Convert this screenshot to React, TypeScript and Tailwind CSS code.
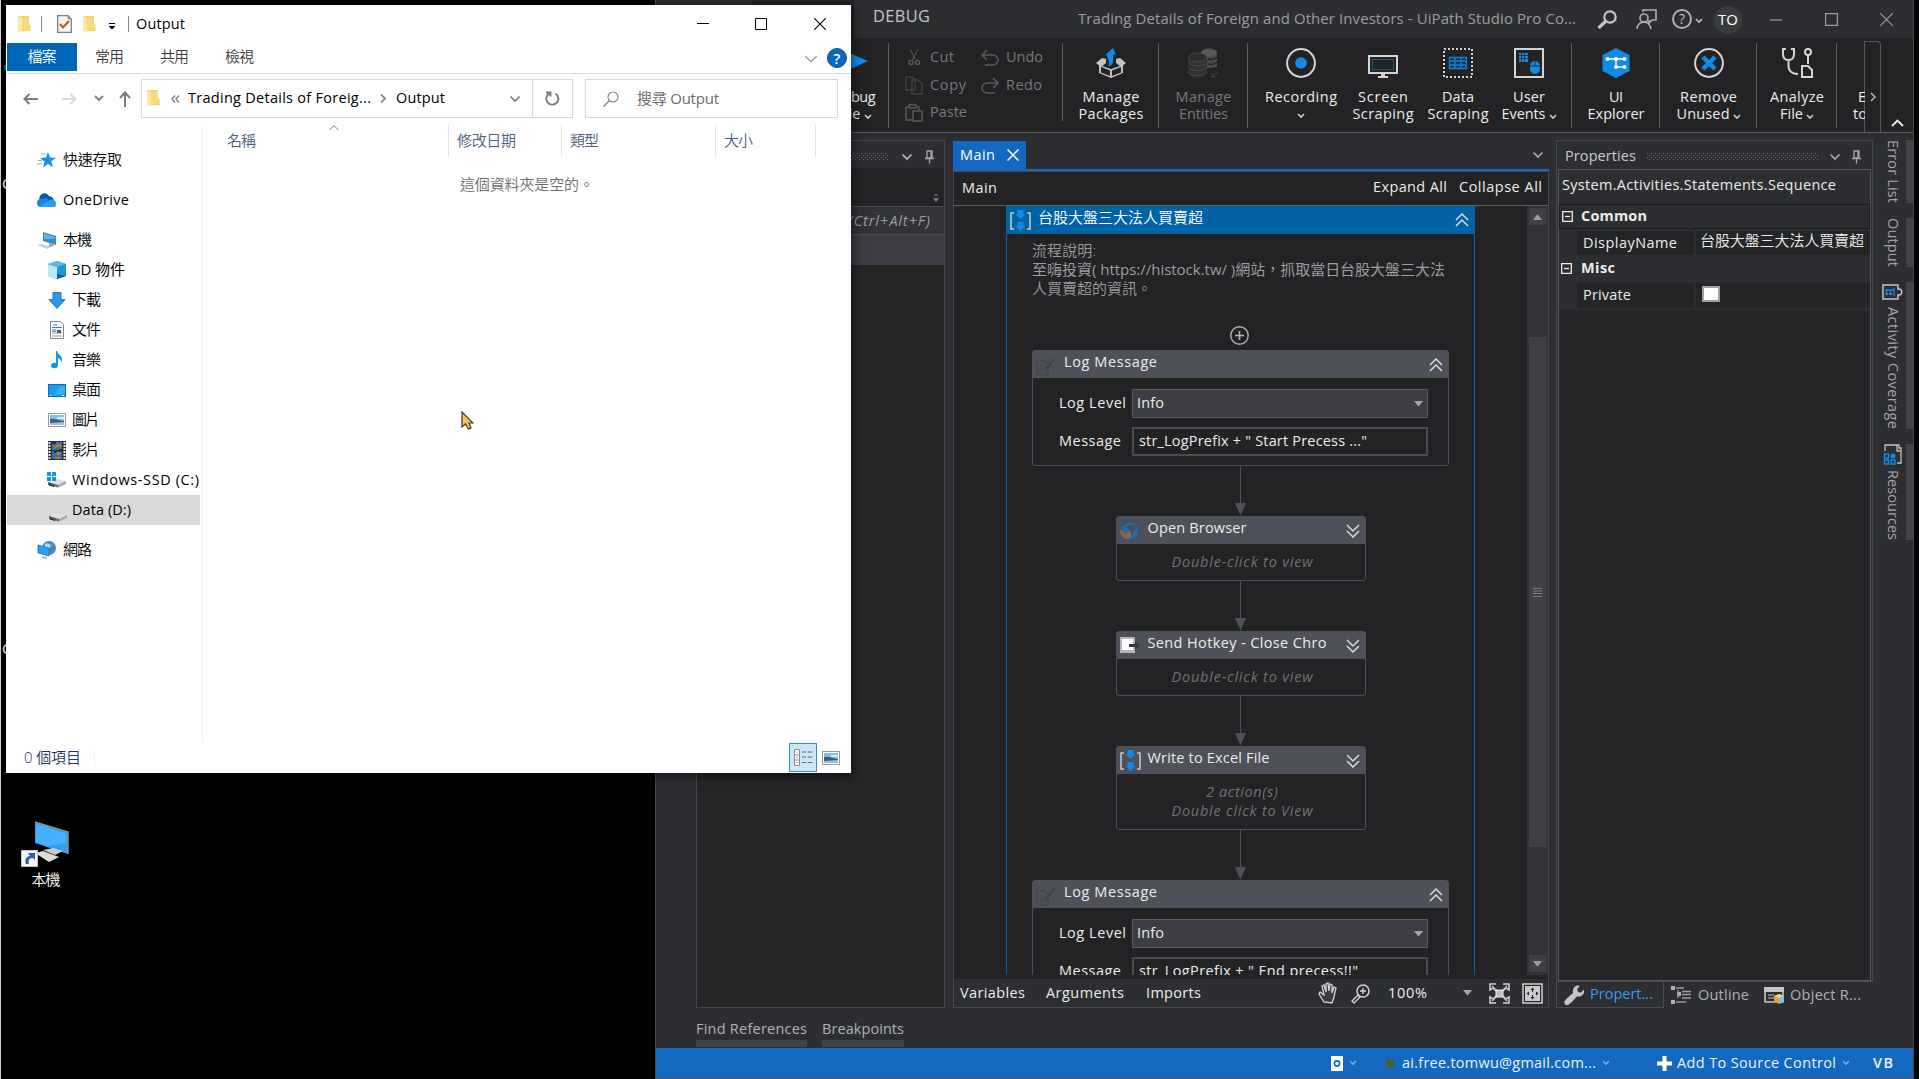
import { useLayoutEffect, useRef, useState } from "react";
import type { ReactNode } from "react";

/* Text that spreads its letters over the width (or height) set by its class. */
function T({ className = "", vertical = false, children }: { className?: string; vertical?: boolean; children: string }) {
  const outer = useRef<HTMLSpanElement>(null);
  const inner = useRef<HTMLSpanElement>(null);
  const [spacing, setSpacing] = useState(0);
  const latin = /^[\x20-\x7e]*$/.test(children);
  const mixed = /[A-Za-z]/.test(children);
  useLayoutEffect(() => {
    if (!outer.current || !inner.current) return;
    const box = inner.current.getBoundingClientRect();
    const room = vertical ? outer.current.clientHeight : outer.current.clientWidth;
    const natural = vertical ? box.height : box.width;
    setSpacing((room - natural) / Math.max(1, children.length - 1));
  }, [children, vertical]);
  return (
    <span ref={outer} className={`block shrink-0 whitespace-nowrap ${className}`}>
      <span
        ref={inner}
        className={`inline-block ${vertical ? "" : "-translate-y-px"} ${latin ? "text-[0.965em]" : ""} ${latin || mixed ? "" : "font-[350]"}`}
        style={{ letterSpacing: spacing }}
      >
        {children}
      </span>
    </span>
  );
}

function Svg({ w, h, className = "", children }: { w: number; h: number; className?: string; children: ReactNode }) {
  return (
    <svg width={w} height={h} viewBox={`0 0 ${w} ${h}`} fill="none" className={`shrink-0 ${className}`}>
      {children}
    </svg>
  );
}

function Chevron({ className = "", small = false }: { className?: string; small?: boolean }) {
  return small ? (
    <Svg w={8} h={6} className={className}>
      <path d="M1 1l3 3 3-3" stroke="currentColor" strokeWidth="1.6" />
    </Svg>
  ) : (
    <Svg w={12} h={8} className={className}>
      <path d="M1.5 1.5L6 6l4.500-4.500" stroke="currentColor" strokeWidth="1.7" />
    </Svg>
  );
}

function Folder({ className = "" }: { className?: string }) {
  return (
    <Svg w={13} h={17} className={className}>
      <path d="M0 0h11v8l1.500 1v6H3z" fill="#f5d06e" />
      <path d="M0 0l4 2v15l-4-2z" fill="#fbe7a8" />
      <path d="M4 2h7v12H4z" fill="#f8d97c" />
    </Svg>
  );
}

function Dots({ width }: { width: number }) {
  return (
    <Svg w={width} h={7}>
      <pattern id="grip-dots" width="4" height="4" patternUnits="userSpaceOnUse">
        <rect width="1" height="1" fill="#686a6e" />
        <rect x="2" y="2" width="1" height="1" fill="#686a6e" />
      </pattern>
      <rect width={width} height="7" fill="url(#grip-dots)" />
    </Svg>
  );
}

function Pin({ className = "" }: { className?: string }) {
  return (
    <Svg w={9} h={14} className={className}>
      <path d="M2 1h5v7H2zM0 8.500h9M4.500 9v4.500M6 1v7" stroke="#a5a6a8" strokeWidth="1.300" />
    </Svg>
  );
}

/* ---------- File Explorer ---------- */

function Picture() {
  return (
    <Svg w={18} h={14}>
      <rect x=".5" y=".5" width="17" height="13" fill="#fff" stroke="#9a9a9a" />
      <path d="M2 2h14v10H2z" fill="#7fc0ee" />
      <path d="M2 6c5-1 9 2 14 2v4H2z" fill="#38617d" />
      <path d="M2 10l14-1v3H2z" fill="#9cc0d8" />
      <path d="M9 4h7v2H9z" fill="#d6ecf9" />
    </Svg>
  );
}

function Drive({ windows = false }: { windows?: boolean }) {
  return (
    <Svg w={20} h={16} className={windows ? "-ml-px" : "mt-2"}>
      <path d="M1 10l9-3 9 2-8 4z" fill="#e0e0e0" />
      <path d="M1 10l10 3v2.500L1 13z" fill="#5a5a58" />
      <path d="M2 12l5 2v1l-5-1.500z" fill="#2b2b2b" />
      <path d="M11 13L19 9v3l-8 3.500z" fill="#a8a8a8" />
      <path d="M8 13.500h1.500v1H8z" fill="#7bd63c" />
      {windows && <path d="M0 0h4v4H0zM5 0h4v4H5zM0 5h4v4H0zM5 5h4v4H5z" fill="#1494ee" />}
    </Svg>
  );
}

function Computer() {
  return (
    <Svg w={20} h={17}>
      <path d="M6 0l13 4v9L6 9z" fill="#5f7f98" />
      <path d="M7 1.500l11 3.400v7L7 8z" fill="#1f93e8" />
      <path d="M7 1.500l11 3.400v2L7 7z" fill="#57b5f5" />
      <path d="M12 11l4 1 1 2-5 1z" fill="#9da3a8" />
      <path d="M0 13l5-1 9 3-4 2z" fill="#c9cccf" />
    </Svg>
  );
}

const sideItems: { label: string; width: string; level: 1 | 2; gap?: boolean; active?: boolean; icon: ReactNode }[] = [
  {
    label: "快速存取", width: "w-[59px]", level: 1,
    icon: (
      <Svg w={20} h={16}>
        <path d="M11 0l2 5.500 6 .2-4.700 3.500 1.700 6L11 12l-5 3.500 1.500-6L3 6l6-.4z" fill="#1f8fe0" />
        <path d="M4 2h5M1 8.500h4M0 12h5" stroke="#6cbcf2" strokeWidth="1.200" />
      </Svg>
    ),
  },
  {
    label: "OneDrive", width: "w-[66px]", level: 1, gap: true,
    icon: (
      <Svg w={20} h={14}>
        <path d="M3 8a5 5 0 0 1 9-5 6 6 0 0 1 5 4z" fill="#0a58a8" />
        <path d="M4 14a4 4 0 0 1 0-8l5-1 10 6a3 3 0 0 1-2 3z" fill="#1a83dc" />
        <path d="M3 13l10-6a4 4 0 0 1 4 7H4z" fill="#2ba2f0" />
      </Svg>
    ),
  },
  { label: "本機", width: "w-[29px]", level: 1, gap: true, icon: <Computer /> },
  {
    label: "3D 物件", width: "w-[53px]", level: 2,
    icon: (
      <Svg w={18} h={18}>
        <path d="M0 3l9-3 9 3v12l-9 3-9-3z" fill="#1b93dd" />
        <path d="M0 3l9 3v12l-9-3z" fill="#bfe8f8" />
        <path d="M0 3l9-3 9 3-9 3z" fill="#5bb9ea" />
        <path d="M9 13l9 2-9 3z" fill="#0a63a8" />
      </Svg>
    ),
  },
  { label: "下載", width: "w-[29px]", level: 2, icon: <Svg w={18} h={17}><path d="M5 .5h8v7h4L9 16.500 1 7.500h4z" fill="#2f96e0" stroke="#1d7cc4" /></Svg> },
  {
    label: "文件", width: "w-[29px]", level: 2,
    icon: (
      <Svg w={18} h={18}>
        <path d="M2.500.5h10l3 3v14h-13z" fill="#fff" stroke="#868686" />
        <path d="M5 4h4M4 6.500h10M4 9h4" stroke="#1787d6" />
        <path d="M4 12h10M4 15h10M4 10.500h4" stroke="#9a9a9a" />
        <path d="M9 9h4v3H9z" fill="#38617d" />
      </Svg>
    ),
  },
  { label: "音樂", width: "w-[29px]", level: 2, icon: <Svg w={18} h={18}><ellipse cx="6.500" cy="14.500" rx="3.500" ry="2.800" fill="#1593e8" /><path d="M9 0c1 4 5 4 5 8 0 2-1 3-1 4 0-3-1-4-3-5v8H8V0z" fill="#1593e8" /></Svg> },
  { label: "桌面", width: "w-[29px]", level: 2, icon: <Svg w={18} h={13}><rect x=".5" y=".5" width="17" height="12" fill="#1e9cf0" stroke="#0f6db4" /><path d="M6 11l7-9h4v8z" fill="#3babf4" /><path d="M2 11.500h1M14 11.500h2" stroke="#fff" /></Svg> },
  { label: "圖片", width: "w-[28px]", level: 2, icon: <Picture /> },
  {
    label: "影片", width: "w-[28px]", level: 2,
    icon: (
      <Svg w={18} h={19}>
        <path d="M0 0h18v19H0z" fill="#2e2e2e" />
        <path d="M1.500 1v17M16.500 1v17" stroke="#e8e8e8" strokeWidth="2" strokeDasharray="2 1" />
        <path d="M4 1h10v8H4zM4 10h10v8H4z" fill="#2f74b4" />
        <path d="M4 1h4v2H4zM11 8h3v3h-3zM6 9h4v3H6z" fill="#22303c" />
        <path d="M9 3h4v3h-3l-4 2V6zM8 11h4v3H9zM7 16h5v2H7z" fill="#c9731b" />
      </Svg>
    ),
  },
  { label: "Windows-SSD (C:)", width: "w-[127px]", level: 2, icon: <Drive windows /> },
  { label: "Data (D:)", width: "w-[59px]", level: 2, active: true, icon: <Drive /> },
  {
    label: "網路", width: "w-[29px]", level: 1, gap: true,
    icon: (
      <Svg w={20} h={18}>
        <circle cx="12" cy="7" r="7" fill="#4d86b8" />
        <path d="M8 3c3-2 4 0 6 1l-2 4-4-1z" fill="#b5d8ee" />
        <path d="M1 4l11 3v8L1 12z" fill="#2aa0ee" stroke="#1773b8" strokeWidth=".8" />
        <path d="M5 15l5 1v2l-5-1z" fill="#b4b8bb" />
      </Svg>
    ),
  },
];

function Explorer() {
  return (
    <div className="absolute left-[6px] top-[5px] flex h-[768px] w-[845px] flex-col bg-white text-[15px] leading-5 text-black shadow-[2px_3px_10px_rgba(0,0,0,0.55)]">
      <div className="flex h-[38px] items-center pl-3">
        <Folder />
        <i className="ml-[10px] h-4 w-px bg-[#8a8a8a]" />
        <Svg w={15} h={18} className="ml-[15px]">
          <path d="M.7.7H11l3.300 3.300v13.300H.7z" fill="#f8f8f8" stroke="#7e7e7e" strokeWidth="1.300" />
          <path d="M11 .7V4h3.300" stroke="#7e7e7e" />
          <path d="M3 9l3 3.500L12 6" stroke="#c8540c" strokeWidth="2" />
        </Svg>
        <Folder className="ml-[11px]" />
        <Svg w={8} h={8} className="ml-3 mt-1"><path d="M1 1.500h6" stroke="#000" strokeWidth="1" /><path d="M.5 4h7L4 7.500z" fill="#000" /></Svg>
        <i className="ml-[12px] h-4 w-px bg-[#8a8a8a]" />
        <T className="ml-[7px] w-[49px]">Output</T>
        <div className="ml-auto flex items-center pr-[25px]">
          <Svg w={12} h={12}><path d="M0 5.500h12" stroke="#000" /></Svg>
          <Svg w={12} h={12} className="ml-[46px] mr-[47px]"><path d="M.5.5h11v11H.5z" stroke="#000" /></Svg>
          <Svg w={12} h={12}><path d="M0 0l12 12M12 0L0 12" stroke="#000" strokeWidth="1.100" /></Svg>
        </div>
      </div>
      <div className="flex h-[31px] items-start border-b border-[#dadada] text-[#3c3c3c]">
        <div className="ml-px flex h-7 w-[70px] items-center justify-center bg-[#0067b8] text-white"><T className="w-[29px]">檔案</T></div>
        <T className="ml-[18px] mt-1 w-[29px]">常用</T>
        <T className="ml-[36px] mt-1 w-[29px]">共用</T>
        <T className="ml-[36px] mt-1 w-[29px]">檢視</T>
        <Svg w={12} h={8} className="ml-auto mr-[10px] mt-3"><path d="M0 1l6 5.500L12 1" stroke="#9a9a9a" strokeWidth="1.300" /></Svg>
        <div className="mr-1 mt-[5px] flex size-5 items-center justify-center rounded-full border border-[#1c4f80] bg-[#0a67c0] text-[15px] font-semibold text-white">?</div>
      </div>
      <div className="mt-[5px] flex h-[39px] items-center text-[#7c7c7c]">
        <Svg w={15} h={12} className="ml-[17px]"><path d="M15 6H1M6.500 1l-5 5 5 5" stroke="currentColor" strokeWidth="2" /></Svg>
        <Svg w={15} h={12} className="ml-6"><path d="M0 6h14M8.500 1l5 5-5 5" stroke="#dadada" strokeWidth="2" /></Svg>
        <Svg w={10} h={7} className="ml-[17px]"><path d="M1 1l4 4 4-4" stroke="currentColor" strokeWidth="1.800" /></Svg>
        <Svg w={12} h={16} className="ml-[15px]"><path d="M6 16V1.500M1 7l5-5.500L11 7" stroke="currentColor" strokeWidth="2" /></Svg>
        <div className="ml-[10px] flex h-[39px] w-[432px] items-center border border-[#d9d9d9]">
          <Folder className="ml-[5px]" />
          <Svg w={9} h={8} className="ml-[11px]"><path d="M4 .5L1 4l3 3.500M8 .5L5 4l3 3.500" stroke="currentColor" strokeWidth="1.300" /></Svg>
          <T className="ml-[8px] w-[183px] text-black">Trading Details of Foreig...</T>
          <Svg w={6} h={9} className="ml-[9px]"><path d="M1 .5l4 4-4 4" stroke="currentColor" strokeWidth="1.700" /></Svg>
          <T className="ml-[10px] w-[49px] text-black">Output</T>
          <Chevron className="ml-auto mr-[11px]" />
          <div className="flex h-full w-[40px] items-center justify-center border-l border-[#d9d9d9]">
            <Svg w={15} h={15}><path d="M10.500 2.500a6 6 0 1 1-6-.2M1 1.500h4.500v4" stroke="currentColor" strokeWidth="1.900" /></Svg>
          </div>
        </div>
        <div className="ml-3 flex h-[39px] w-[253px] items-center border border-[#d9d9d9] text-[#6b6b6b]">
          <Svg w={16} h={16} className="ml-[17px]"><circle cx="10" cy="6" r="5" stroke="#8a8a8a" strokeWidth="1.200" /><path d="M6.500 9.500L.5 15.500" stroke="#8a8a8a" strokeWidth="1.400" /></Svg>
          <T className="ml-[18px] w-[82px]">搜尋 Output</T>
        </div>
      </div>
      <div className="flex min-h-0 flex-1 pt-[7px]">
        <div className="flex w-[196px] flex-col pt-5">
          {sideItems.map((s) => (
            <div
              key={s.label}
              className={`ml-px flex h-[30px] w-[193px] shrink-0 items-center ${s.gap ? "mt-[10px]" : ""} ${s.active ? "bg-[#d9d9d9]" : ""} ${s.level === 1 ? "pl-[30px]" : "pl-[41px]"}`}
            >
              <span className={`flex shrink-0 justify-start ${s.level === 1 ? "w-[26px]" : "w-[24px]"}`}>{s.icon}</span>
              <T className={s.width}>{s.label}</T>
            </div>
          ))}
        </div>
        <div className="flex-1 border-l border-[#f0f0f0]">
          <div className="relative flex h-[31px] items-center text-[#4c607a]">
            <Svg w={10} h={6} className="absolute left-[126px] top-0"><path d="M.5 5L5 .8 9.500 5" stroke="#7a7a7a" /></Svg>
            <div className="flex h-full w-[246px] items-center border-r border-[#e3e3e3] pl-6"><T className="w-[29px]">名稱</T></div>
            <div className="flex h-full w-[113px] items-center border-r border-[#e3e3e3] pl-[8px]"><T className="w-[59px]">修改日期</T></div>
            <div className="flex h-full w-[154px] items-center border-r border-[#e3e3e3] pl-[8px]"><T className="w-[29px]">類型</T></div>
            <div className="flex h-full w-[100px] items-center border-r border-[#e3e3e3] pl-[8px]"><T className="w-[29px]">大小</T></div>
          </div>
          <T className="ml-[257px] mt-[19px] w-[134px] text-[#6d6d6d]">這個資料夾是空的。</T>
        </div>
      </div>
      <div className="flex h-[31px] items-center pl-[18px] text-[#1e395b]">
        <T className="w-[57px]">0 個項目</T>
        <i className="ml-[13px] h-4 w-px bg-[#f0f0f0]" />
        <div className="ml-auto flex h-[29px] w-[28px] items-center justify-center border border-[#3c8fc4] bg-[#cbe8f6]">
          <Svg w={19} h={17}>
            <path d="M.5.5h5v16h-5zM.5 6h5M.5 11h5" fill="#fff" stroke="#8a8a8a" />
            <path d="M8 3h4M13.500 3h5M8 8h4M13.500 8h5M8 13.500h4M13.500 13.500h5" stroke="#666" />
            <path d="M2.500 3h1" stroke="#1787d6" /><path d="M2.500 8.500h1" stroke="#39832a" /><path d="M2.500 13.500h1" stroke="#c03020" />
          </Svg>
        </div>
        <span className="ml-[5px] mr-[11px]"><Picture /></span>
      </div>
    </div>
  );
}

/* ---------- Studio: ribbon ---------- */

function Tool({ icon, lines, cell, dim = false }: { icon: ReactNode; lines: ReactNode; cell: string; dim?: boolean }) {
  return (
    <div className={`flex shrink-0 flex-col items-center pt-[10px] leading-4 ${dim ? "text-[#77787b]" : "text-[#ececec]"} ${cell}`}>
      <div className="mb-[11px] flex h-[30px] items-end">{icon}</div>
      {lines}
    </div>
  );
}

function WithChevron({ children }: { children: ReactNode }) {
  return (
    <span className="flex items-center gap-[3px]">
      {children}
      <Chevron small className="mt-1 text-[#cfcfcf]" />
    </span>
  );
}

function Divider({ className = "h-[85px]" }: { className?: string }) {
  return <i className={`-ml-px mt-[5px] w-px shrink-0 bg-[#5a5c62] ${className}`} />;
}

function Ribbon() {
  return (
    <div className="flex h-[95px] shrink-0 border-b border-[#5a5c62] bg-[#232325] pl-[164px] text-[15px]">
      <Tool cell="w-[69px]" icon={<Svg w={26} h={24} className="mb-1"><path d="M0 0l26 11L0 23z" fill="#0f8ce9" /></Svg>}
        lines={<><T className="w-[42px]">Debug</T><WithChevron><T className="w-[23px]">File</T></WithChevron></>} />
      <Divider />
      <div className="flex w-[174px] shrink-0 text-[#77787b]">
        <div className="ml-4 mt-[9px] flex w-[75px] flex-col leading-5">
          <div className="flex h-5 items-center">
            <Svg w={18} h={18}><path d="M5 1l5.500 11M13 1L7.500 12" stroke="#5b5c5f" /><circle cx="6" cy="14.500" r="2" stroke="#5b5c5f" strokeWidth="1.400" /><circle cx="12.500" cy="14.500" r="2" stroke="#5b5c5f" strokeWidth="1.400" /></Svg>
            <T className="ml-[7px] w-[24px]">Cut</T>
          </div>
          <div className="mt-2 flex h-5 items-center">
            <Svg w={18} h={19}><path d="M1 1h6l3 3v10H1zM7 4h6l4 4v10H7z" stroke="#414245" strokeWidth="1.400" fill="#232325" /></Svg>
            <T className="ml-[7px] w-[36px]">Copy</T>
          </div>
          <div className="mt-[7px] flex h-5 items-center">
            <Svg w={18} h={19}><path d="M7 17H1V4h3V2h2l1-1 1 1h3v2h3v3M4 5h7M8 8h9v10H8z" stroke="#5b5c5f" strokeWidth="1.400" /></Svg>
            <T className="ml-[7px] w-[37px]">Paste</T>
          </div>
        </div>
        <div className="mt-[9px] flex flex-col leading-5">
          <div className="flex h-5 items-center">
            <Svg w={20} h={17}><path d="M7 1L2 6l5 5M2 6h11a5 5 0 0 1 0 10H5" stroke="#5b5c5f" strokeWidth="1.500" /></Svg>
            <T className="ml-[6px] w-[37px]">Undo</T>
          </div>
          <div className="mt-2 flex h-5 items-center">
            <Svg w={20} h={17}><path d="M13 1l5 5-5 5M18 6H7a5 5 0 0 0 0 10h8" stroke="#5b5c5f" strokeWidth="1.500" /></Svg>
            <T className="ml-[6px] w-[36px]">Redo</T>
          </div>
        </div>
      </div>
      <Divider className="h-[78px]" />
      <Tool cell="w-[96px]" lines={<><T className="w-[57px]">Manage</T><T className="w-[65px]">Packages</T></>}
        icon={<Svg w={30} h={30}><path d="M3 17l12 4 12-4v8l-12 5L3 25z" fill="#bfc0c2" /><path d="M5 19l9 3.500V28l-9-3.500zM25 19l-9 3.500V28l9-3.500z" fill="#232325" /><path d="M0 15l6-5 4 1v4l-5 4zM30 15l-6-5-4 1v4l5 4z" fill="#c4c5c7" /><path d="M12 18c3-4-1-7-1-11l-2 .5L17 0l3 7-3-.5c0 5 2 8-3 11.500z" fill="#0f8ce9" /></Svg>} />
      <Divider />
      <Tool dim cell="w-[89px]" lines={<><T className="w-[56px]">Manage</T><T className="w-[49px]">Entities</T></>}
        icon={<Svg w={31} h={30}>
          <path d="M13 4v17l16-2V4z" fill="#4a4b4d" /><path d="M20 11c4 1 8 0 9-2M20 16c4 1 8 0 9-2M20 21c4 1 8 0 9-2" stroke="#232325" strokeWidth="1.500" />
          <ellipse cx="21" cy="4.500" rx="8" ry="4" fill="#58595b" />
          <path d="M0 10v15c3 6 16 6 19 0V10z" fill="#303133" /><ellipse cx="9.500" cy="9.500" rx="9" ry="4.500" fill="#2b2c2e" stroke="#48494c" />
          <path d="M.5 14c3 5 15 5 18 0M.5 19c3 5 15 5 18 0M.5 24c3 5 15 5 18 0" stroke="#48494c" /><path d="M29 24l-5 5M24 25v4h4" stroke="#48494c" />
        </Svg>} />
      <Divider />
      <Tool cell="ml-[11px] w-[84px]" lines={<><T className="w-[72px]">Recording</T><Chevron small className="mt-[7px] text-[#cfcfcf]" /></>}
        icon={<Svg w={30} h={30}><circle cx="15" cy="15" r="13.900" stroke="#d4d4d4" strokeWidth="2" /><circle cx="15" cy="15" r="5.800" fill="#0f8ce9" /></Svg>} />
      <Tool cell="ml-[3px] w-[74px]" lines={<><T className="w-[50px]">Screen</T><T className="w-[61px]">Scraping</T></>}
        icon={<Svg w={30} h={23}><path d="M1 1h28v17H1z" stroke="#d4d4d4" strokeWidth="2" /><path d="M13 19h4v2h3v2H10v-2h3z" fill="#d4d4d4" /><path d="M4.500 4.500h21v10h-21z" stroke="#0f8ce9" strokeDasharray="1 1" /></Svg>} />
      <Tool cell="w-[76px]" lines={<><T className="w-[32px]">Data</T><T className="w-[61px]">Scraping</T></>}
        icon={<Svg w={30} h={30}><path d="M1 1h28v28H1z" stroke="#d4d4d4" strokeWidth="2" strokeDasharray="2 2" /><path d="M6.500 9.500h17v11h-17zM6.500 13h17M6.500 17h17M12 9.500v11M18 9.500v11" stroke="#1581d2" strokeWidth="1.300" fill="#123652" /></Svg>} />
      <Tool cell="w-[66px]" lines={<><T className="w-[32px]">User</T><WithChevron><T className="w-[44px]">Events</T></WithChevron></>}
        icon={<Svg w={30} h={30}><path d="M1 1h28v28H1z" stroke="#d4d4d4" strokeWidth="2" /><path d="M5 5h9v9H5z" fill="#0f8ce9" /><path d="M7.500 5v9M10.500 5v9M5 7.500h9M5 10.500h9" stroke="#232325" strokeWidth=".8" /><rect x="16" y="13" width="10" height="13" rx="5" fill="#0f8ce9" /><path d="M16 18h10M21 13v5" stroke="#232325" /></Svg>} />
      <Divider className="ml-[9px] h-[85px]" />
      <Tool cell="w-[88px]" lines={<><T className="w-[14px]">UI</T><T className="w-[57px]">Explorer</T></>}
        icon={<Svg w={28} h={30}><path d="M14 0l13.500 7v16L14 30 .5 23V7z" fill="#0f8ce9" /><path d="M5 11h18M14 11v8h8" stroke="#fff" strokeWidth="1.400" /><g fill="#fff"><circle cx="5.500" cy="11" r="2" /><circle cx="14" cy="11" r="2" /><circle cx="22.500" cy="11" r="2" /><circle cx="14" cy="19" r="2" /><circle cx="22.500" cy="19" r="2" /></g></Svg>} />
      <Divider />
      <Tool cell="w-[97px]" lines={<><T className="w-[57px]">Remove</T><WithChevron><T className="w-[53px]">Unused</T></WithChevron></>}
        icon={<Svg w={30} h={30}><circle cx="15" cy="15" r="13.900" stroke="#d4d4d4" strokeWidth="2" /><path d="M9 9l12 12M21 9L9 21" stroke="#0f8ce9" strokeWidth="4.500" /></Svg>} />
      <Divider />
      <Tool cell="w-[80px]" lines={<><T className="w-[54px]">Analyze</T><WithChevron><T className="w-[23px]">File</T></WithChevron></>}
        icon={<Svg w={31} h={30}><path d="M4 1H1v5c0 4 2 6 5.500 6S12 10 12 6V1H9M6.500 12v6c0 5 4 8 9.500 8" stroke="#d4d4d4" strokeWidth="2" /><circle cx="26" cy="4" r="3" stroke="#d4d4d4" strokeWidth="2" /><path d="M26 7v9M20 18h6l4 4v7H20z" stroke="#d4d4d4" strokeWidth="2" /></Svg>} />
      <Divider />
      <div className="w-[28px] shrink-0 overflow-hidden pl-[16px] pt-[51px] leading-4 text-[#ececec]">
        <T className="ml-[5px] w-[8px]">E</T>
        <T className="w-[14px]">to</T>
      </div>
      <div className="-ml-px mt-[3px] flex w-[17px] shrink-0 items-center justify-center rounded-tr border border-b-0 border-[#55575c] pt-5">
        <Svg w={6} h={10}><path d="M1 1l4 4-4 4" stroke="#b5b5b5" strokeWidth="1.500" /></Svg>
      </div>
      <Svg w={13} h={8} className="ml-[10px] mt-[81px]"><path d="M1 7l5.500-5.500L12 7" stroke="#e8e8e8" strokeWidth="1.900" /></Svg>
    </div>
  );
}

function TitleBar() {
  return (
    <div className="flex h-[38px] shrink-0 items-center bg-[#2d2e31] text-[#9c9d9f]">
      <i className="ml-[96px] h-full w-[102px] bg-[#232325]" />
      <T className="-mt-1 ml-[19px] w-[57px] text-[17px] text-[#c4c5c6]">DEBUG</T>
      <T className="ml-[148px] w-[498px] text-[15.500px]">Trading Details of Foreign and Other Investors - UiPath Studio Pro Co...</T>
      <Svg w={20} h={19} className="ml-[21px]"><circle cx="13" cy="7" r="5.700" stroke="#c4c5c6" strokeWidth="2.200" /><path d="M9 11l-7.500 7" stroke="#c4c5c6" strokeWidth="3.200" /></Svg>
      <Svg w={21} h={21} className="ml-[19px] mt-0"><circle cx="8" cy="9" r="4" stroke="#b0b1b3" strokeWidth="1.600" /><path d="M1 20c0-4 3-7 7-7s6 3 7 7M7 3V1h13v10h-4l-3 3v-3" stroke="#b0b1b3" strokeWidth="1.600" /></Svg>
      <div className="ml-[15px] flex size-5 items-center justify-center rounded-full border-2 border-[#b0b1b3] text-[14px] text-[#c4c5c6]">?</div>
      <Chevron small className="ml-[3px] mt-1 text-[#c4c5c6]" />
      <div className="ml-[11px] mt-[1px] flex size-7 items-center justify-center rounded-full bg-[#3a3b3f] text-[15.500px] text-white"><T className="w-[20px]">TO</T></div>
      <Svg w={13} h={13} className="ml-[28px]"><path d="M0 7h12" stroke="currentColor" strokeWidth="1.200" /></Svg>
      <Svg w={13} h={13} className="ml-[42px]"><path d="M.6.6h11.800v11.800H.6z" stroke="currentColor" strokeWidth="1.200" /></Svg>
      <Svg w={13} h={13} className="ml-[42px]"><path d="M0 0l13 13M13 0L0 13" stroke="currentColor" strokeWidth="1.200" /></Svg>
    </div>
  );
}

/* ---------- Studio: panels ---------- */

function ActivitiesPanel() {
  return (
    <div className="ml-[40px] mt-[7px] flex h-[868px] w-[249px] shrink-0 flex-col border border-[#46484d] bg-[#252628]">
      <div className="flex h-[27px] shrink-0 items-center justify-end bg-[#2d2e32] pt-1">
        <Dots width={180} />
        <Chevron className="ml-3 text-[#b5b6b8]" />
        <Pin className="ml-[12px] mr-[10px]" />
      </div>
      <div className="flex h-[38px] shrink-0 items-end justify-end bg-[#242527] pb-1 pr-[5px]">
        <Svg w={6} h={8}><path d="M1 1h4" stroke="#7d7e80" /><path d="M0 4h6L3 8z" fill="#7d7e80" /></Svg>
      </div>
      <div className="flex h-[29px] shrink-0 items-center justify-end border-y border-[#4a4c51] bg-[#323337] pr-[14px] text-[15.500px] italic text-[#9a9b9d]">
        <T className="w-[205px]">Search activities (Ctrl+Alt+F)</T>
      </div>
      <div className="h-[30px] shrink-0 bg-[#3d3d45]" />
    </div>
  );
}

function DoubleChevron({ down = false }: { down?: boolean }) {
  return (
    <Svg w={14} h={14} className={down ? "rotate-180" : ""}>
      <path d="M1 7l6-6 6 6M1 13l6-6 6 6" stroke="#d8d9da" strokeWidth="1.500" />
    </Svg>
  );
}

function SequenceIcon() {
  return (
    <Svg w={21} h={21}>
      <path d="M4 3H1v16h3M17 3h3v16h-3" stroke="#c9cacc" strokeWidth="1.500" />
      <path d="M7.500 0h6v4h2l-5 5-5-5h2zM7.500 12h6v4h2l-5 5-5-5h2z" fill="#0f8ce9" />
    </Svg>
  );
}

function GlobeIcon() {
  return (
    <Svg w={20} h={20}>
      <circle cx="10" cy="10" r="9" fill="#2b6aa0" stroke="#1f5c91" />
      <path d="M9 4c4-2 8 2 7 5l-3 2v5l-3-4V9l-4-2z" fill="#464f5d" />
      <path d="M0 8l6 6V11h5v4c-1 3-5 4-7 2C1 15 0 12 0 8z" fill="#8a6a40" />
    </Svg>
  );
}

function HotkeyIcon() {
  return (
    <Svg w={20} h={17}>
      <path d="M0 0h15v16H0z" fill="#b4b6b8" /><path d="M2 2h11v11H2z" fill="#fff" />
      <path d="M9 7h6V4l5 4.500-5 4.500v-3H9z" fill="#37383c" />
    </Svg>
  );
}

function LogIcon() {
  return (
    <Svg w={19} h={19} className="-ml-px">
      <path d="M1 4h8l3 3v11H1zM3 9h5M3 12h5M3 15h4" stroke="#42444a" strokeWidth="1.200" />
      <path d="M18 1L9 11l-1 3 3-1 8-11z" fill="#42444a" />
    </Svg>
  );
}

function Connector() {
  return (
    <Svg w={11} h={50}>
      <path d="M5.500 0v40" stroke="#50525a" strokeWidth="1" /><path d="M0 37h11L5.500 49.500z" fill="#50525a" />
    </Svg>
  );
}

function LogCard({ text, width }: { text: string; width: string }) {
  return (
    <div className="h-[116px] w-[417px] shrink-0 rounded-[3px] border border-[#4e5159]">
      <div className="flex h-[27px] items-center bg-[#4e5159] pl-1 pr-[5px]">
        <span className="mt-1"><LogIcon /></span>
        <T className="-mt-[5px] ml-[9px] w-[93px] text-[#ececec]">Log Message</T>
        <span className="ml-auto"><DoubleChevron /></span>
      </div>
      <div className="flex items-center pl-[26px] pt-[11px]">
        <T className="w-[67px] text-[#ececec]">Log Level</T>
        <div className="ml-[6px] flex h-[29px] w-[296px] items-center border border-[#5b5d62] bg-[#3d3d45] pl-1 pr-[4px] text-[#ececec]">
          <T className="w-[27px]">Info</T>
          <Svg w={9} h={6} className="ml-auto"><path d="M0 0h9L4.500 5.500z" fill="#a5a6a8" /></Svg>
        </div>
      </div>
      <div className="flex items-center pl-[26px] pt-[9px]">
        <T className="w-[62px] text-[#ececec]">Message</T>
        <div className="ml-[11px] flex h-[29px] w-[296px] items-center border-2 border-[#4a4c53] pl-[5px] text-[#ececec]">
          <T className={width}>{text}</T>
        </div>
      </div>
    </div>
  );
}

function ActivityCard({ icon, title, width, lines }: { icon: ReactNode; title: string; width: string; lines: string[] }) {
  return (
    <div className="w-[250px] shrink-0 rounded-[3px] border border-[#4e5159]">
      <div className="flex h-[27px] items-center bg-[#4e5159] pl-[3px] pr-[5px]">
        <span className="flex w-[28px]">{icon}</span>
        <T className={`-mt-[5px] text-[#ececec] ${width}`}>{title}</T>
        <span className="ml-auto"><DoubleChevron down /></span>
      </div>
      <div className="flex flex-col items-center pb-2 pl-[3px] pt-[9px] leading-[19px] italic text-[#717274]">
        {lines.map((l) => (
          <T key={l} className={l.startsWith("2") ? "w-[72px]" : "w-[141px]"}>{l}</T>
        ))}
      </div>
    </div>
  );
}

function Designer() {
  return (
    <div className="ml-[8px] mt-[8px] flex w-[596px] shrink-0 flex-col text-[15px] leading-5">
      <div className="flex h-[30px] shrink-0 items-start border-b-2 border-[#1568bf]">
        <div className="flex h-[29px] w-[73px] items-center bg-[#1568bf] pb-px pl-[7px] text-white">
          <T className="w-[35px]">Main</T>
          <Svg w={12} h={12} className="ml-3"><path d="M.5.5l11 11M11.500.5l-11 11" stroke="#fff" strokeWidth="1.500" /></Svg>
        </div>
        <Chevron className="ml-auto mr-[5px] mt-[10px] text-[#a5a6a8]" />
      </div>
      <div className="flex h-[837px] flex-col border border-[#46484d] bg-[#232325]">
        <div className="flex h-[34px] shrink-0 items-center border-b border-[#5a5c62] pl-2 pr-[6px] text-[#ececec]">
          <T className="w-[35px]">Main</T>
          <T className="-mt-[3px] ml-auto w-[74px]">Expand All</T>
          <T className="-mt-[3px] ml-3 w-[83px]">Collapse All</T>
        </div>
        <div className="flex h-[769px] shrink-0 overflow-hidden">
          <div className="ml-[52px] flex h-[1000px] w-[469px] shrink-0 flex-col items-center border-x border-[#0067b0]">
            <div className="flex h-7 w-[469px] shrink-0 items-center bg-[#0063a6] pl-1 pr-[6px] text-white">
              <SequenceIcon />
              <T className="-mt-1 ml-[7px] w-[165px]">台股大盤三大法人買賣超</T>
              <span className="ml-auto"><DoubleChevron /></span>
            </div>
            <div className="mt-[8px] w-[417px] shrink-0 leading-[19px] text-[#9c9d9f]">
              <T className="w-[64px]">流程說明:</T>
              <T className="w-[413px]">至嗨投資( https://histock.tw/ )網站，抓取當日台股大盤三大法</T>
              <T className="w-[120px]">人買賣超的資訊。</T>
            </div>
            <Svg w={19} h={19} className="mr-[3px] mt-[27px]"><circle cx="9.500" cy="9.500" r="8.700" stroke="#b0b1b3" strokeWidth="1.400" /><path d="M5 9.500h9M9.500 5v9" stroke="#b0b1b3" strokeWidth="1.600" /></Svg>
            <div className="h-[5px] shrink-0" />
            <LogCard text={'str_LogPrefix + " Start Precess ..."'} width="w-[228px]" />
            <Connector />
            <ActivityCard icon={<GlobeIcon />} title="Open Browser" width="w-[99px]" lines={["Double-click to view"]} />
            <Connector />
            <ActivityCard icon={<HotkeyIcon />} title="Send Hotkey - Close Chro" width="w-[179px]" lines={["Double-click to view"]} />
            <Connector />
            <ActivityCard icon={<SequenceIcon />} title="Write to Excel File" width="w-[122px]" lines={["2 action(s)", "Double click to View"]} />
            <Connector />
            <LogCard text={'str_LogPrefix + " End precess!!"'} width="w-[219px]" />
          </div>
          <div className="ml-auto flex w-[21px] flex-col items-center bg-[#333337] pb-[3px] pt-[2px]">
            <div className="flex size-[17px] items-center justify-center bg-[#3f3f44]"><Svg w={9} h={6}><path d="M0 6h9L4.500 0z" fill="#9c9d9f" /></Svg></div>
            <div className="mt-[112px] flex h-[510px] w-[17px] items-center justify-center bg-[#404146]">
              <Svg w={9} h={9}><path d="M0 .5h9M0 3h9M0 5.500h9M0 8.500h9" stroke="#7d7e80" /></Svg>
            </div>
            <div className="mt-auto flex size-[17px] items-center justify-center bg-[#3f3f44]"><Svg w={9} h={6}><path d="M0 0h9L4.500 6z" fill="#9c9d9f" /></Svg></div>
          </div>
        </div>
        <div className="mt-auto flex h-[28px] shrink-0 items-center bg-[#2d2e32] pl-[6px] text-[#ececec]">
          <T className="w-[65px]">Variables</T>
          <T className="ml-[21px] w-[78px]">Arguments</T>
          <T className="ml-[22px] w-[55px]">Imports</T>
          <Svg w={21} h={22} className="ml-[117px]">
            <path d="M6 20l-5-8 1-2 4 3L4 4l2-1 2 7V2l2-1 1 8 1-7 2 1v8l2-6 2 1-2 9-2 6z" stroke="#d4d4d4" strokeWidth="1.300" fill="#3a3b3f" />
          </Svg>
          <Svg w={20} h={21} className="ml-[11px]"><circle cx="13" cy="8" r="6" stroke="#d4d4d4" strokeWidth="1.500" /><path d="M10 8h6M13 5v6" stroke="#d4d4d4" strokeWidth="1.400" /><path d="M8 12l-6 6 2 2 6-6z" stroke="#d4d4d4" strokeWidth="1.400" /></Svg>
          <T className="ml-[18px] w-[39px]">100%</T>
          <Svg w={9} h={6} className="ml-[36px]"><path d="M0 0h9L4.500 5.500z" fill="#a5a6a8" /></Svg>
          <Svg w={21} h={21} className="ml-[17px]">
            <path d="M7 1H1v6l3-2 3 3M14 1h6v6l-3-2-3 3M7 20H1v-6l3 2 3-3M14 20h6v-6l-3 2-3-3" stroke="#d4d4d4" strokeWidth="1.500" />
            <path d="M3 3l4 4M18 3l-4 4M3 18l4-4M18 18l-4-4" stroke="#bfc0c2" strokeWidth="1.500" />
            <path d="M7 7h7v7H7z" fill="#bfc0c2" stroke="#eee" />
          </Svg>
          <Svg w={21} h={21} className="ml-[12px]">
            <path d="M1 1h19v19H1z" stroke="#d4d4d4" strokeWidth="1.500" fill="#232325" /><path d="M3 3h15v15H3z" fill="#c9cacc" />
            <path d="M10.500 4.500l2 2.500h-4zM10.500 16.500l2-2.500h-4zM4.500 10.500l2.500-2v4zM16.500 10.500L14 8.500v4z" fill="#232325" />
            <path d="M10 7h1v2h-1zM10 12h1v2h-1z" fill="#232325" />
          </Svg>
        </div>
      </div>
    </div>
  );
}

function Minus() {
  return <Svg w={11} h={11} className="ml-[2px]"><path d="M.7.7h9.600v9.600H.7z" stroke="#ececec" strokeWidth="1.300" /><path d="M3 5.500h5" stroke="#ececec" strokeWidth="1.300" /></Svg>;
}

function Properties() {
  return (
    <div className="ml-[7px] mt-[7px] flex w-[317px] shrink-0 flex-col text-[15px] leading-5 text-[#ececec]">
      <div className="flex h-[842px] flex-col border border-[#46484d]">
        <div className="flex h-[28px] shrink-0 items-center pl-[8px] pt-[3px]">
          <T className="w-[71px] text-[#c9cacc]">Properties</T>
          <span className="ml-[11px]"><Dots width={171} /></span>
          <Chevron className="ml-[11px] text-[#a5a6a8]" />
          <Pin className="ml-[11px]" />
        </div>
        <div className="mx-px flex flex-1 flex-col border border-[#55575c] bg-[#252628]">
          <div className="flex h-[34px] shrink-0 items-center bg-[#2d2e32] pl-[3px] pb-1"><T className="w-[274px]">System.Activities.Statements.Sequence</T></div>
          <div className="flex h-[25px] shrink-0 items-center border border-dotted border-black bg-[#2d2e32]">
            <Minus /><T className="ml-2 w-[66px] font-bold">Common</T>
          </div>
          <div className="flex h-[28px] shrink-0 border-l-[18px] border-y-2 border-[#2d2e32] bg-[#242527]">
            <div className="flex w-[119px] items-center border-r-2 border-[#2d2e32] pl-[6px]"><T className="w-[94px]">DisplayName</T></div>
            <T className="ml-[4px] w-[164px]">台股大盤三大法人買賣超</T>
          </div>
          <div className="flex h-[24px] shrink-0 items-center bg-[#2d2e32] pb-px"><Minus /><T className="ml-[9px] w-[34px] font-bold">Misc</T></div>
          <div className="flex h-[29px] shrink-0 items-center border-l-[18px] border-y-2 border-[#2d2e32] bg-[#242527]">
            <div className="flex h-full w-[119px] items-center border-r-2 border-[#2d2e32] pl-[6px]"><T className="w-[48px]">Private</T></div>
            <i className="-mt-[3px] ml-[6px] h-[16px] w-[18px] border-2 border-[#a0a0a0] bg-white" />
          </div>
        </div>
      </div>
      <div className="flex h-[26px] items-center text-[#b0b1b3]">
        <div className="flex h-full w-[108px] items-center border border-t-0 border-[#4a4c51] pl-[7px]">
          <Svg w={20} h={20}><path d="M1 19c-2-2 0-4 8-11-1-5 3-9 7-7l-3 3 1 3 3 .500 3-3c1 4-2 8-7 7-7 8-10 10-12 8z" fill="#c4c5c6" /></Svg>
          <T className="ml-[6px] w-[63px] text-[#3a9bed]">Propert...</T>
        </div>
        <Svg w={20} h={18} className="ml-[7px]"><path d="M0 0h4v4H0zM0 14h4v4H0zM6 6h4v4H6z" fill="#b0b1b3" /><path d="M5 2h8M11 5.500h9M11 8.500h9M11 12h9M5 16h10M7 4v8" stroke="#9c9d9f" strokeWidth="1.400" /></Svg>
        <T className="ml-[7px] w-[51px]">Outline</T>
        <Svg w={20} h={17} className="ml-[15px]"><path d="M1 1h18v14H1z" stroke="#c4c5c6" strokeWidth="1.600" /><path d="M0 0h20v5H0z" fill="#c4c5c6" /><path d="M4 8h6M4 11h6" stroke="#c4c5c6" /><path d="M10 9l5-2 5 2v5l-5 3-5-3z" fill="#eb9a3c" /><path d="M15 11l5-2v5l-5 3z" fill="#7fc3f2" /><path d="M10 9l5-2 5 2-5 2z" fill="#f6d68c" /></Svg>
        <T className="ml-[6px] w-[71px]">Object R...</T>
      </div>
    </div>
  );
}

function SideTabs() {
  return (
    <div className="ml-[9px] mt-[7px] flex w-[31px] shrink-0 flex-col text-[15px] leading-5 text-[#a5a6a8]">
      <div className="flex h-[63px] border-r-[7px] border-[#434548]"><T vertical className="ml-px h-[63px] w-5 [writing-mode:vertical-rl]">Error List</T></div>
      <div className="mt-[15px] flex h-[49px] border-r-[7px] border-[#434548]"><T vertical className="ml-px h-[49px] w-5 [writing-mode:vertical-rl]">Output</T></div>
      <div className="mt-[15px] flex h-[147px] flex-col border-r-[7px] border-[#434548]">
        <Svg w={21} h={16} className="mt-[2px]"><path d="M1 1h15v4c5-1 5 7 0 6v4H1z" stroke="#c4c5c6" strokeWidth="1.500" /><path d="M3 6h8M4.500 6v5M8.500 6v5M12 4v8" stroke="#0f8ce9" strokeWidth="1.300" /><path d="M3 9h3v2H3zM7 9h3v2H7z" fill="#0f8ce9" /></Svg>
        <T vertical className="ml-px mt-[7px] h-[122px] w-5 [writing-mode:vertical-rl]">Activity Coverage</T>
      </div>
      <div className="mt-[15px] flex h-[96px] flex-col border-r-[7px] border-[#434548]">
        <Svg w={20} h={21} className="ml-px"><path d="M2 7V1h14v3h2v15h-4M14 1v6h3" stroke="#c4c5c6" strokeWidth="1.300" /><path d="M1.500 10h4v4h-4zM1.500 16h4v4h-4zM8 16h4v4H8z" stroke="#0f8ce9" strokeWidth="1.400" /><circle cx="10" cy="12" r="2.500" fill="#0f8ce9" /></Svg>
        <T vertical className="ml-px mt-[5px] h-[70px] w-5 [writing-mode:vertical-rl]">Resources</T>
      </div>
    </div>
  );
}

function Studio() {
  return (
    <div className="absolute left-[655px] top-0 flex h-[1079px] w-[1259px] flex-col border-x border-[#46484d] bg-[#2d2e32] text-[15px] leading-5">
      <TitleBar />
      <Ribbon />
      <div className="flex h-[876px] shrink-0">
        <ActivitiesPanel />
        <Designer />
        <Properties />
        <SideTabs />
      </div>
      <div className="ml-[40px] flex pt-[10px] text-[#b0b1b3]">
        <T className="h-[28px] w-[111px] border-b-[7px] border-[#434548]">Find References</T>
        <T className="ml-[15px] h-[28px] w-[82px] border-b-[7px] border-[#434548]">Breakpoints</T>
      </div>
      <div className="mt-auto flex h-[31px] shrink-0 items-center border-b border-[#55575c] bg-[#1568bf] text-[#eaf2fb]">
        <Svg w={12} h={15} className="ml-[675px]"><path d="M0 0h12v15H0z" fill="#fff" /><circle cx="6" cy="7.500" r="2.600" stroke="#1568bf" strokeWidth="1.600" /></Svg>
        <Chevron small className="ml-[6px] text-[#7fb0e2]" />
        <i className="ml-[29px] h-[9px] w-[8px] rounded-full bg-[#4f5c26]" />
        <T className="ml-[8px] w-[194px]">ai.free.tomwu@gmail.com...</T>
        <Chevron small className="ml-[6px] text-[#7fb0e2]" />
        <Svg w={15} h={15} className="ml-[47px]"><path d="M7.500 0v15M0 7.500h15" stroke="#fff" strokeWidth="4" /></Svg>
        <T className="ml-[5px] w-[159px]">Add To Source Control</T>
        <Chevron small className="ml-[6px] text-[#7fb0e2]" />
        <T className="ml-[23px] w-[20px] font-semibold">VB</T>
      </div>
    </div>
  );
}

function Desktop() {
  return (
    <>
      <div className="absolute left-[2px] top-[173px] text-[15px] leading-5 text-white">C</div>
      <div className="absolute left-[2px] top-[638px] text-[15px] leading-5 text-white">C</div>
      <i className="absolute left-[4px] top-[64px] size-[7px] rounded-full bg-[#2a5fb8]" />
      <div className="absolute left-[6px] top-[820px] flex w-[80px] flex-col items-center text-[15px] leading-5 text-white">
        <Svg w={48} h={48} className="-ml-[2px]">
          <path d="M14 2l33 10v22L14 23z" fill="#2f9ff2" /><path d="M14 2l33 10v22" stroke="#8a8f94" strokeWidth="1.500" />
          <path d="M15 4l30 9.500v10L25 26l-10-4z" fill="#4db4fb" opacity=".8" />
          <path d="M22 30l10-2 10 3-8 4z" fill="#c9cacc" /><path d="M14 33l8-2 16 6-10 5z" fill="#dcdcdc" />
          <path d="M.5 30.500h16v16H.5z" fill="#f4f4f4" stroke="#c4c4c4" /><path d="M5 44c-2-5 1-8 4-8l-2-3h7v7l-2-2c-4 0-5 2-4 6z" fill="#2463a8" />
        </Svg>
        <T className="mt-[2px] w-[29px]">本機</T>
      </div>
    </>
  );
}

export default function App() {
  return (
    <div className="relative h-[1079px] w-[1919px] overflow-hidden border-l border-[#c8cccc] bg-black font-['Open_Sans','Noto_Sans_CJK_TC',sans-serif]">
      <div className="absolute -left-px top-0 h-full w-full">
        <Desktop />
        <Studio />
        <Explorer />
        <Svg w={13} h={19} className="absolute left-[461px] top-[411px]">
          <path d="M1 1v15l3.500-3 3 5 2.500-1-2-5h4z" fill="#f6c453" stroke="#3a3a3a" strokeWidth="1.200" />
        </Svg>
      </div>
    </div>
  );
}
